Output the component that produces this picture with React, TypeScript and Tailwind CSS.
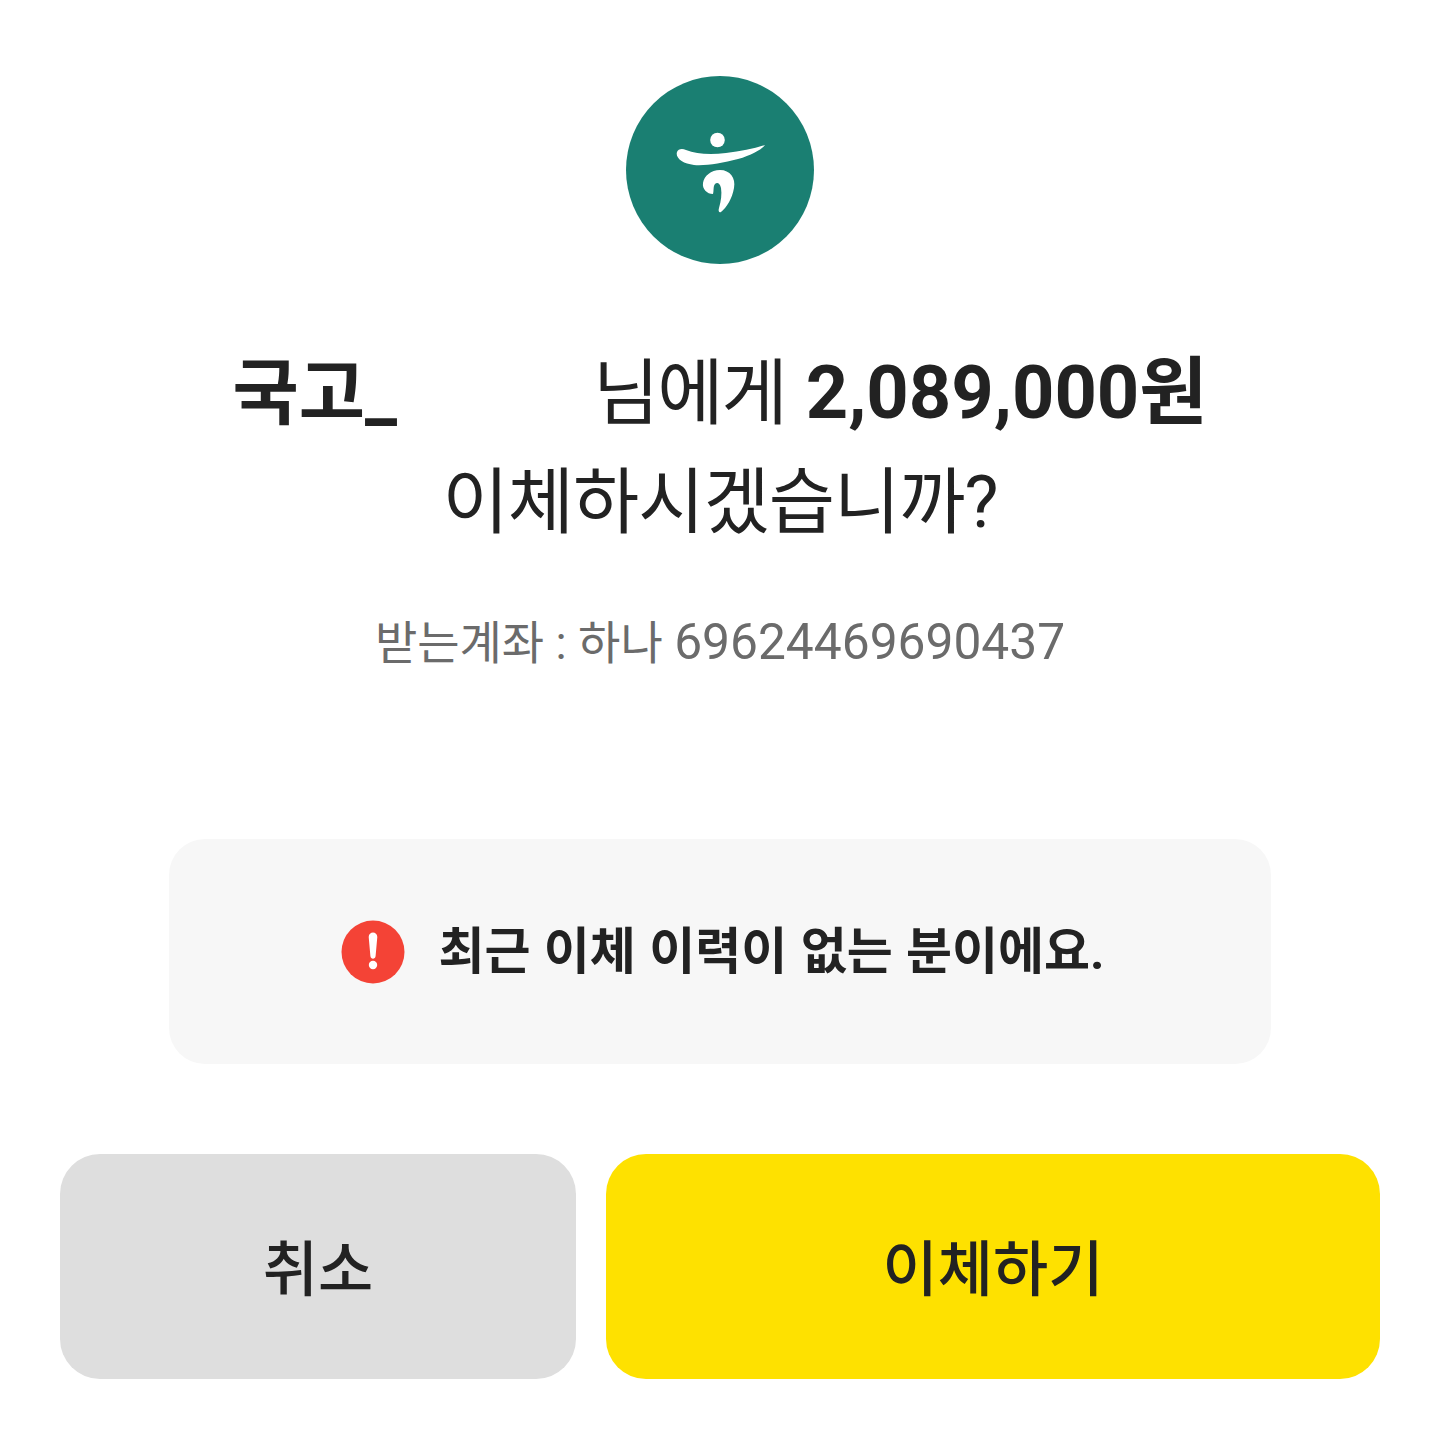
import React from "react";

const fontStack = "font-['Roboto','Noto_Sans_CJK_KR',sans-serif]";

const BankLogo = () => {
  return (
    <svg viewBox="0 0 188 188" className="block w-[188px] h-[188px]">
      <circle cx="94" cy="94" r="94" fill="#1a7f72" />
      <circle cx="91.5" cy="64" r="7.3" fill="#fff" />
      <path
        d="M51 76 C52 73 56 72 60 74 C70 78 84 79 100 77 C115 75 128 73 139 69 C136 73 126 79 112 83 C96 87 80 90 68 89 C57 88 49 82 51 76 Z"
        fill="#fff"
      />
      <path
        d="M94 94 C104 94 110 102 108 112 C106 123 101 131 95 136 C93 137 92 135 93 132 C95 125 96 118 95 112 C94 107 91 106 89 108 C87 110 88 115 87 118 C81 118 76 113 77 107 C78 100 85 94 94 94 Z"
        fill="#fff"
      />
    </svg>
  );
};

const AlertIcon = () => {
  return (
    <svg viewBox="0 0 64 64" className="block w-16 h-16 shrink-0">
      <circle cx="32" cy="32" r="31.5" fill="#f44336" />
      <path d="M27.7 17 C27.7 11 36.3 11 36.3 17 L34.6 36 C34.3 39.5 29.7 39.5 29.4 36 Z" fill="#fff" />
      <circle cx="32" cy="45" r="4.2" fill="#fff" />
    </svg>
  );
};

export default function App() {
  return (
    <div className={`flex flex-col items-center w-[1440px] h-[1439px] bg-white text-[#222222] ${fontStack}`}>
      <div className="mt-[76px]">
        <BankLogo />
      </div>

      <div className="mt-[76px] text-[72px] leading-[106px] text-center whitespace-nowrap">
        <div className="flex justify-center items-baseline">
          <span className="font-bold">국고_</span>
          <span className="w-[196px]"></span>
          <span className="tracking-[-2px]">님에게&nbsp;</span>
          <span className="ml-[4px] font-bold text-[74px]">2,089,000원</span>
        </div>
        <div className="tracking-[-1px] pt-[3px]">이체하시겠습니까?</div>
      </div>

      <p className="mt-[56px] text-[46px] leading-[60px] text-[#6b6b6b] whitespace-nowrap flex items-baseline">
        받는계좌 : 하나&nbsp;<span className="text-[49.7px]">69624469690437</span>
      </p>

      <div className="mt-[166px] flex items-center justify-center gap-[33px] pl-[6px] w-[1102px] h-[225px] rounded-[36px] bg-[#f7f7f7]">
        <AlertIcon />
        <span className="pt-[2px] text-[50px] font-bold [word-spacing:1px]">최근 이체 이력이 없는 분이에요.</span>
      </div>

      <div className="mt-[90px] flex gap-[30px] w-[1320px]">
        <button className="flex items-center justify-center w-[516px] h-[225px] pt-[8px] rounded-[40px] bg-[#dedede] text-[60px] font-medium">
          취소
        </button>
        <button className="flex items-center justify-center flex-1 h-[225px] pt-[8px] rounded-[40px] bg-[#fee100] text-[60px] font-medium">
          이체하기
        </button>
      </div>
    </div>
  );
}
